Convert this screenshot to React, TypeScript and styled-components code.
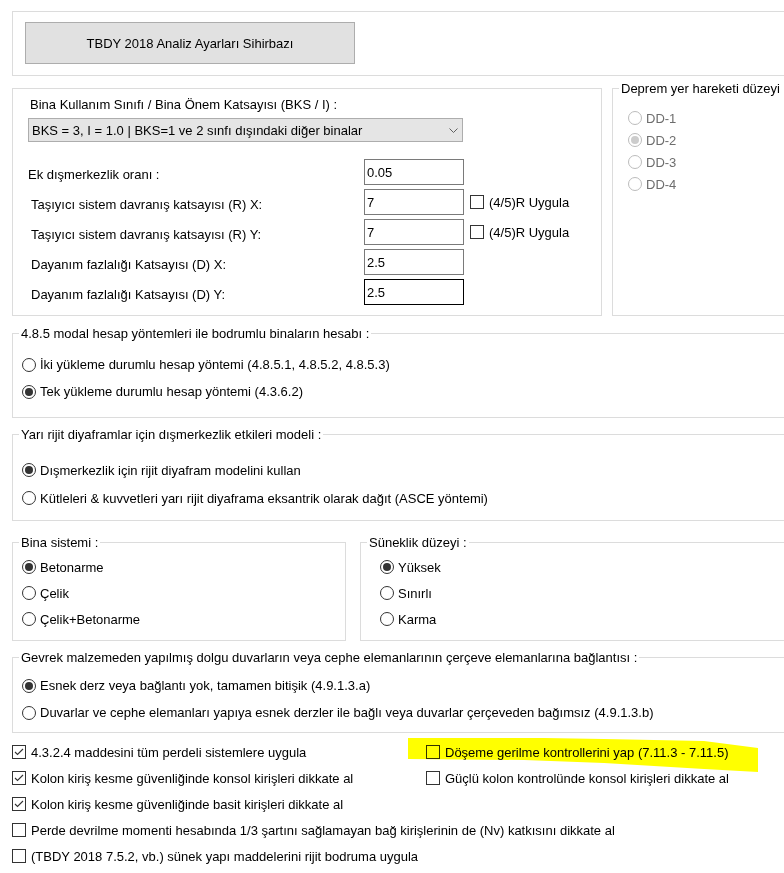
import React from 'react';
import styled, { createGlobalStyle } from 'styled-components';

const FONT = `'Liberation Sans', Arial, sans-serif`;

const GlobalStyle = createGlobalStyle`
  html, body {
    margin: 0;
    padding: 0;
    background: #ffffff;
    overflow: hidden;
  }

  body {
    font-family: ${FONT};
    font-size: 13px;
    color: #000000;
  }
`;

const Page = styled.div`
  position: relative;
  width: 790px;
  padding: 11px 0 0 12px;
`;

const WizardGroup = styled.div`
  box-sizing: border-box;
  height: 65px;
  border: 1px solid #dcdcdc;
  padding: 10px 0 0 12px;
`;

const WizardButton = styled.button`
  box-sizing: border-box;
  width: 330px;
  height: 42px;
  padding: 0;
  background: #e1e1e1;
  border: 1px solid #adadad;
  font: 13px ${FONT};
  color: #000000;
`;

const Row = styled.div<{ $top: number; $gap: number }>`
  display: flex;
  margin-top: ${(p) => p.$top}px;
  gap: ${(p) => p.$gap}px;
`;

const ParamPanel = styled.div`
  box-sizing: border-box;
  flex: none;
  width: 590px;
  height: 228px;
  margin-top: 7px;
  border: 1px solid #dcdcdc;
  padding: 8px 0 0 15px;
`;

const PanelTitle = styled.div`
  line-height: 15px;
  margin: 0 0 6px 2px;
`;

const Select = styled.div`
  box-sizing: border-box;
  width: 435px;
  height: 24px;
  display: flex;
  align-items: center;
  justify-content: space-between;
  padding: 0 4px 0 3px;
  background: #e5e5e5;
  border: 1px solid #adadad;
  white-space: nowrap;
`;

const ParamGrid = styled.div`
  display: grid;
  grid-template-columns: 336px 100px auto;
  grid-auto-rows: 26px;
  row-gap: 4px;
  align-items: center;
  margin-top: 17px;
`;

const ParamLabel = styled.div<{ $indent?: boolean }>`
  line-height: 15px;
  margin-top: 4px;
  padding-left: ${(p) => (p.$indent ? 3 : 0)}px;
  white-space: nowrap;
`;

const ParamInput = styled.input<{ $focused?: boolean }>`
  box-sizing: border-box;
  width: 100px;
  height: 26px;
  margin: 0;
  padding: 0 2px;
  border: 1px solid ${(p) => (p.$focused ? '#000000' : '#7a7a7a')};
  outline: none;
  font: 13px ${FONT};
  color: #000000;
  background: #ffffff;
`;

const GroupBox = styled.fieldset<{ $top: number; $height: number; $width?: number }>`
  box-sizing: border-box;
  flex: ${(p) => (p.$width ? 'none' : '1')};
  width: ${(p) => (p.$width ? `${p.$width}px` : 'auto')};
  height: ${(p) => p.$height}px;
  min-width: 0;
  margin: ${(p) => p.$top}px 0 0 0;
  padding: 0;
  border: 1px solid #dcdcdc;
`;

const Legend = styled.legend`
  margin-left: 6px;
  padding: 0 2px;
  line-height: 15px;
  white-space: nowrap;
`;

const OptionList = styled.div<{ $pt: number; $pl: number; $row: number }>`
  display: grid;
  grid-auto-rows: ${(p) => p.$row}px;
  align-items: center;
  padding: ${(p) => p.$pt}px 0 0 ${(p) => p.$pl}px;
`;

const OptionRow = styled.div<{ $disabled?: boolean }>`
  display: flex;
  align-items: center;
  gap: 4px;
  line-height: 15px;
  white-space: nowrap;
  color: ${(p) => (p.$disabled ? '#6d6d6d' : '#000000')};
`;

const RadioCircle = styled.span<{ $checked?: boolean; $disabled?: boolean }>`
  box-sizing: border-box;
  flex: none;
  width: 14px;
  height: 14px;
  border-radius: 50%;
  border: 1px solid ${(p) => (p.$disabled ? '#bcbcbc' : '#333333')};
  display: flex;
  align-items: center;
  justify-content: center;

  &::after {
    content: '';
    display: ${(p) => (p.$checked ? 'block' : 'none')};
    width: 8px;
    height: 8px;
    border-radius: 50%;
    background: ${(p) => (p.$disabled ? '#cccccc' : '#333333')};
  }
`;

const CheckRow = styled.div<{ $span?: boolean }>`
  display: flex;
  align-items: center;
  gap: 5px;
  line-height: 15px;
  white-space: nowrap;
  grid-column: ${(p) => (p.$span ? '1 / -1' : 'auto')};
`;

const CheckBox = styled.span`
  box-sizing: border-box;
  flex: none;
  width: 14px;
  height: 14px;
  border: 1px solid #333333;
  display: flex;

  svg {
    display: block;
  }
`;

const InlineCheck = styled(CheckRow)`
  margin-left: 6px;
`;

const OptionsGrid = styled.div`
  display: grid;
  grid-template-columns: 414px 1fr;
  grid-auto-rows: 26px;
  align-items: center;
  margin-top: 6px;
`;

const Highlight = styled.svg`
  position: absolute;
  left: 404px;
  top: 734px;
  mix-blend-mode: multiply;
  pointer-events: none;
`;

const Chevron = () => (
  <svg width="9" height="5" viewBox="0 0 9 5">
    <polyline points="0.5,0.5 4.5,4.5 8.5,0.5" fill="none" stroke="#606060" strokeWidth="1" />
  </svg>
);

const Radio = ({ checked, disabled, children }: { checked?: boolean; disabled?: boolean; children: React.ReactNode }) => (
  <OptionRow $disabled={disabled}>
    <RadioCircle $checked={checked} $disabled={disabled} />
    {children}
  </OptionRow>
);

const Check = ({ checked, span, children }: { checked?: boolean; span?: boolean; children: React.ReactNode }) => (
  <CheckRow $span={span}>
    <CheckBox>
      {checked && (
        <svg width="12" height="12" viewBox="0 0 12 12">
          <polyline points="2,6 4.5,8.5 10,3" fill="none" stroke="#333333" strokeWidth="1.1" />
        </svg>
      )}
    </CheckBox>
    {children}
  </CheckRow>
);

const params = [
  { label: 'Ek dışmerkezlik oranı :', value: '0.05', indent: false, r: false },
  { label: 'Taşıyıcı sistem davranış katsayısı (R) X:', value: '7', indent: true, r: true },
  { label: 'Taşıyıcı sistem davranış katsayısı (R) Y:', value: '7', indent: true, r: true },
  { label: 'Dayanım fazlalığı Katsayısı (D) X:', value: '2.5', indent: true, r: false },
  { label: 'Dayanım fazlalığı Katsayısı (D) Y:', value: '2.5', indent: true, r: false },
];

export default function App() {
  return (
    <>
      <GlobalStyle />
      <Page>
        <WizardGroup>
          <WizardButton>TBDY 2018 Analiz Ayarları Sihirbazı</WizardButton>
        </WizardGroup>

        <Row $top={5} $gap={10}>
          <ParamPanel>
            <PanelTitle>Bina Kullanım Sınıfı / Bina Önem Katsayısı (BKS / I) :</PanelTitle>
            <Select>
              <span>BKS = 3, I = 1.0 | BKS=1 ve 2 sınfı dışındaki diğer binalar</span>
              <Chevron />
            </Select>
            <ParamGrid>
              {params.map((p, i) => (
                <React.Fragment key={p.label}>
                  <ParamLabel $indent={p.indent}>{p.label}</ParamLabel>
                  <ParamInput readOnly value={p.value} $focused={i === params.length - 1} />
                  {p.r ? (
                    <InlineCheck>
                      <CheckBox />
                      (4/5)R Uygula
                    </InlineCheck>
                  ) : (
                    <span />
                  )}
                </React.Fragment>
              ))}
            </ParamGrid>
          </ParamPanel>

          <GroupBox $top={0} $height={235}>
            <Legend>Deprem yer hareketi düzeyi :</Legend>
            <OptionList $pt={11} $pl={15} $row={22}>
              <Radio disabled>DD-1</Radio>
              <Radio disabled checked>DD-2</Radio>
              <Radio disabled>DD-3</Radio>
              <Radio disabled>DD-4</Radio>
            </OptionList>
          </GroupBox>
        </Row>

        <GroupBox $top={10} $height={92}>
          <Legend>4.8.5 modal hesap yöntemleri ile bodrumlu binaların hesabı :</Legend>
          <OptionList $pt={10} $pl={9} $row={27}>
            <Radio>İki yükleme durumlu hesap yöntemi (4.8.5.1, 4.8.5.2, 4.8.5.3)</Radio>
            <Radio checked>Tek yükleme durumlu hesap yöntemi (4.3.6.2)</Radio>
          </OptionList>
        </GroupBox>

        <GroupBox $top={9} $height={94}>
          <Legend>Yarı rijit diyaframlar için dışmerkezlik etkileri modeli :</Legend>
          <OptionList $pt={14} $pl={9} $row={28}>
            <Radio checked>Dışmerkezlik için rijit diyafram modelini kullan</Radio>
            <Radio>Kütleleri &amp; kuvvetleri yarı rijit diyaframa eksantrik olarak dağıt (ASCE yöntemi)</Radio>
          </OptionList>
        </GroupBox>

        <Row $top={14} $gap={14}>
          <GroupBox $top={0} $height={106} $width={334}>
            <Legend>Bina sistemi :</Legend>
            <OptionList $pt={4} $pl={9} $row={26}>
              <Radio checked>Betonarme</Radio>
              <Radio>Çelik</Radio>
              <Radio>Çelik+Betonarme</Radio>
            </OptionList>
          </GroupBox>
          <GroupBox $top={0} $height={106}>
            <Legend>Süneklik düzeyi :</Legend>
            <OptionList $pt={4} $pl={19} $row={26}>
              <Radio checked>Yüksek</Radio>
              <Radio>Sınırlı</Radio>
              <Radio>Karma</Radio>
            </OptionList>
          </GroupBox>
        </Row>

        <GroupBox $top={9} $height={83}>
          <Legend>Gevrek malzemeden yapılmış dolgu duvarların veya cephe elemanlarının çerçeve elemanlarına bağlantısı :</Legend>
          <OptionList $pt={7} $pl={9} $row={27}>
            <Radio checked>Esnek derz veya bağlantı yok, tamamen bitişik (4.9.1.3.a)</Radio>
            <Radio>Duvarlar ve cephe elemanları yapıya esnek derzler ile bağlı veya duvarlar çerçeveden bağımsız (4.9.1.3.b)</Radio>
          </OptionList>
        </GroupBox>

        <OptionsGrid>
          <Check checked>4.3.2.4 maddesini tüm perdeli sistemlere uygula</Check>
          <Check>Döşeme gerilme kontrollerini yap (7.11.3 - 7.11.5)</Check>
          <Check checked>Kolon kiriş kesme güvenliğinde konsol kirişleri dikkate al</Check>
          <Check>Güçlü kolon kontrolünde konsol kirişleri dikkate al</Check>
          <Check checked span>Kolon kiriş kesme güvenliğinde basit kirişleri dikkate al</Check>
          <Check span>Perde devrilme momenti hesabında 1/3 şartını sağlamayan bağ kirişlerinin de (Nv) katkısını dikkate al</Check>
          <Check span>(TBDY 2018 7.5.2, vb.) sünek yapı maddelerini rijit bodruma uygula</Check>
        </OptionsGrid>

        <Highlight width="358" height="42" viewBox="0 0 358 42">
          <polygon
            points="4,4 140,4 200,5 300,7 354,14 354,38 300,35 200,29 120,26 4,25"
            fill="#ffff00"
          />
        </Highlight>
      </Page>
    </>
  );
}
